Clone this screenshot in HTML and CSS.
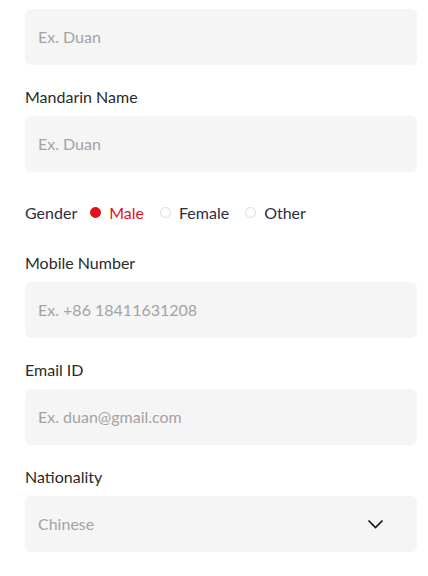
FILE: index.html
```html
<!DOCTYPE html>
<html>
<head>
<meta charset="utf-8">
<link rel="stylesheet" href="styles.css">
</head>
<body>
<form class="form">
  <div class="input"><span class="ph">Ex. Duan</span></div>

  <label class="label">Mandarin Name</label>
  <div class="input"><span class="ph">Ex. Duan</span></div>

  <div class="gender">
    <span class="gender-label">Gender</span>
    <span class="opt checked"><span class="dot"></span>Male</span>
    <span class="opt"><span class="dot"></span>Female</span>
    <span class="opt"><span class="dot"></span>Other</span>
  </div>

  <label class="label">Mobile Number</label>
  <div class="input"><span class="ph">Ex. +86 18411631208</span></div>

  <label class="label">Email ID</label>
  <div class="input"><span class="ph">Ex. duan@gmail.com</span></div>

  <label class="label">Nationality</label>
  <div class="input select"><span class="ph">Chinese</span>
    <svg class="chev" width="17" height="10" viewBox="0 0 17 10"><path d="M1.5 1.5 L8.5 8.5 L15.5 1.5" fill="none" stroke="#111" stroke-width="1.6"/></svg>
  </div>
</form>
</body>
</html>
```
FILE: styles.css
```css
* { box-sizing: border-box; }
body {
  margin: 0;
  background: #fff;
  font-family: Lato, "Noto Sans", sans-serif;
  font-size: 16px;
  color: #333;
}
.form {
  display: flex;
  flex-direction: column;
  padding: 9px 11px 0 25px;
}
.input {
  height: 56px;
  background: #f5f5f5;
  border-radius: 6px;
  display: flex;
  align-items: center;
  padding: 0 13px 2px;
  position: relative;
}
.ph {
  color: #a3a3a3;
  font-size: 16px;
}
.label {
  display: block;
  line-height: 20px;
  margin-top: 22px;
  margin-bottom: 9px;
  color: #2a2a2a;
}
.gender {
  display: flex;
  align-items: center;
  line-height: 20px;
  margin-top: 31px;
  margin-bottom: 8px;
  color: #2b2d42;
}
.gender-label { margin-right: 13px; }
.opt {
  display: flex;
  align-items: center;
  margin-right: 16px;
}
.dot {
  width: 11px;
  height: 11px;
  border-radius: 50%;
  border: 1px solid #dcdcdc;
  margin-right: 8px;
  margin-top: -2px;
}
.opt.checked { color: #e0101d; }
.opt.checked .dot { background: #e0101d; border-color: #e0101d; }
.select { justify-content: space-between; }
.chev { margin-right: 20px; margin-top: 2px; }
```
